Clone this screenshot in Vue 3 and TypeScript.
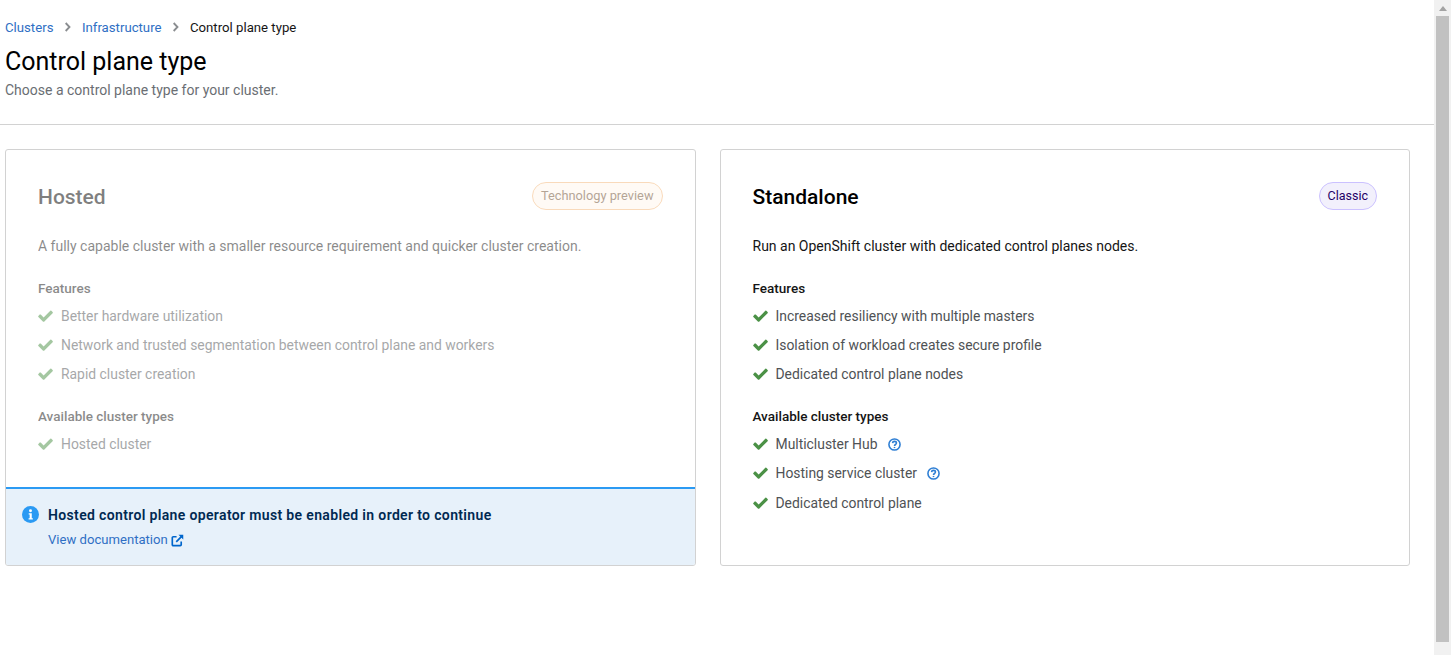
<script setup lang="ts">
interface Feature {
  label: string
  help?: boolean
}

interface PlaneCard {
  title: string
  badge: string
  badgeKind: string
  description: string
  features: Feature[]
  types: Feature[]
  disabled: boolean
}

const cards: PlaneCard[] = [
  {
    title: 'Hosted',
    badge: 'Technology preview',
    badgeKind: 'badge-orange',
    description: 'A fully capable cluster with a smaller resource requirement and quicker cluster creation.',
    features: [
      { label: 'Better hardware utilization' },
      { label: 'Network and trusted segmentation between control plane and workers' },
      { label: 'Rapid cluster creation' }
    ],
    types: [{ label: 'Hosted cluster' }],
    disabled: true
  },
  {
    title: 'Standalone',
    badge: 'Classic',
    badgeKind: 'badge-purple',
    description: 'Run an OpenShift cluster with dedicated control planes nodes.',
    features: [
      { label: 'Increased resiliency with multiple masters' },
      { label: 'Isolation of workload creates secure profile' },
      { label: 'Dedicated control plane nodes' }
    ],
    types: [
      { label: 'Multicluster Hub', help: true },
      { label: 'Hosting service cluster', help: true },
      { label: 'Dedicated control plane' }
    ],
    disabled: false
  }
]
</script>

<template>
  <div class="page">
    <div class="content">
      <header class="page-header">
        <nav class="breadcrumb">
          <a class="link">Clusters</a>
          <svg class="crumb-sep" viewBox="0 0 8 12"><path d="M1.8 1.2 6.4 6l-4.6 4.8" /></svg>
          <a class="link">Infrastructure</a>
          <svg class="crumb-sep" viewBox="0 0 8 12"><path d="M1.8 1.2 6.4 6l-4.6 4.8" /></svg>
          <span>Control plane type</span>
        </nav>
        <h1>Control plane type</h1>
        <p class="subtitle">Choose a control plane type for your cluster.</p>
      </header>

      <main class="cards">
        <section v-for="card in cards" :key="card.title" class="card">
          <div class="card-body" :class="{ disabled: card.disabled }">
            <div class="card-top">
              <h2>{{ card.title }}</h2>
              <span class="badge" :class="card.badgeKind">{{ card.badge }}</span>
            </div>
            <p class="description">{{ card.description }}</p>

            <h3>Features</h3>
            <ul>
              <li v-for="item in card.features" :key="item.label">
                <svg class="check" viewBox="0 0 16 13"><path d="M5.4 12.6.3 7.5a.8.8 0 0 1 0-1.1l1.4-1.4a.8.8 0 0 1 1.1 0L6 8.2 13.2.9a.8.8 0 0 1 1.1 0l1.4 1.4a.8.8 0 0 1 0 1.1L6.5 12.6a.8.8 0 0 1-1.1 0z" /></svg>
                <span>{{ item.label }}</span>
              </li>
            </ul>

            <h3 class="types-title">Available cluster types</h3>
            <ul class="types-list">
              <li v-for="item in card.types" :key="item.label">
                <svg class="check" viewBox="0 0 16 13"><path d="M5.4 12.6.3 7.5a.8.8 0 0 1 0-1.1l1.4-1.4a.8.8 0 0 1 1.1 0L6 8.2 13.2.9a.8.8 0 0 1 1.1 0l1.4 1.4a.8.8 0 0 1 0 1.1L6.5 12.6a.8.8 0 0 1-1.1 0z" /></svg>
                <span>{{ item.label }}</span>
                <svg v-if="item.help" class="help" viewBox="0 0 14 14">
                  <circle cx="7" cy="7" r="6" />
                  <path d="M4.9 5.5C5 4.2 5.9 3.6 7 3.6c1.2 0 2.1.7 2.1 1.8 0 1.6-2.1 1.6-2.1 3.2" />
                  <path d="M7 9.6v1.3" />
                </svg>
              </li>
            </ul>
          </div>

          <div v-if="card.disabled" class="alert">
            <svg class="alert-icon" viewBox="0 0 16 16">
              <circle cx="8" cy="8" r="8" fill="#2b9af3" />
              <circle cx="8" cy="4.5" r="1.4" fill="#fff" />
              <path d="M6.3 6.9h2.9v4.6h1v1.2H6.2v-1.2h1V8.1h-.9z" fill="#fff" />
            </svg>
            <div>
              <div class="alert-title">Hosted control plane operator must be enabled in order to continue</div>
              <a class="link alert-link">
                View documentation
                <svg class="external" viewBox="0 0 14 14">
                  <path d="M11 8v3.6a1 1 0 0 1-1 1H2.4a1 1 0 0 1-1-1V4a1 1 0 0 1 1-1H6" fill="none" stroke="#0066cc" stroke-width="1.8" />
                  <path d="M8 .8h5.2V6l-1.9-1.9-5 5-1.3-1.3 5-5z" fill="#0066cc" />
                </svg>
              </a>
            </div>
          </div>
        </section>
      </main>
    </div>

    <aside class="scrollbar">
      <span class="scroll-arrow"></span>
      <span class="scroll-thumb"></span>
    </aside>
  </div>
</template>

<style>
html,
body {
  margin: 0;
  height: 100%;
  overflow: hidden;
  background: #fff;
}
</style>

<style scoped>
.page {
  display: flex;
  height: 655px;
  font-family: Roboto, "Noto Sans", sans-serif;
  font-size: 14px;
  color: #151515;
}

.content {
  flex: 1;
  min-width: 0;
}

.page-header {
  height: 124px;
  padding: 0 5px;
  border-bottom: 1px solid #d2d2d2;
}

.breadcrumb {
  display: flex;
  align-items: center;
  height: 20px;
  padding-top: 17px;
  font-size: 13.2px;
}

.link {
  color: #2f6fc4;
}

.crumb-sep {
  width: 7px;
  height: 10px;
  margin: 0 11px 0 10.5px;
  fill: none;
  stroke: #8a8d90;
  stroke-width: 2.2;
}

h1 {
  margin: 9px 0 0;
  font-size: 25px;
  font-weight: 400;
  line-height: 32px;
  color: #000;
}

.subtitle {
  margin: 2px 0 0;
  line-height: 20px;
  color: #6a6e73;
}

.cards {
  display: grid;
  grid-template-columns: 1fr 1fr;
  gap: 24px;
  padding: 24px 24px 0 5px;
}

.card {
  display: flex;
  flex-direction: column;
  height: 417px;
  box-sizing: border-box;
  border: 1px solid #d2d2d2;
  border-radius: 3px;
  overflow: hidden;
}

.card-body {
  flex: 1;
  padding: 32px 32px 0;
}

.card-body.disabled {
  opacity: 0.5;
}

.card-top {
  display: flex;
  align-items: flex-start;
  justify-content: space-between;
}

h2 {
  margin: 0;
  padding-top: 1px;
  font-size: 21px;
  font-weight: 500;
  line-height: 28px;
  color: #000;
}

.badge {
  box-sizing: border-box;
  height: 28px;
  padding: 0 8px;
  border: 1px solid;
  border-radius: 14px;
  line-height: 25px;
}

.badge-orange {
  font-size: 12.8px;
  background: #fff6ec;
  border-color: #f4b678;
  color: #6a4a2c;
}

.badge-purple {
  font-size: 12.5px;
  background: #f2f0fc;
  border-color: #cbc1ff;
  color: #1f0066;
}

.description {
  margin: 25px 0 0;
  line-height: 20px;
}

h3 {
  margin: 22px 0 0;
  font-size: 13.5px;
  font-weight: 500;
  line-height: 20px;
}

.types-title {
  margin-top: 21px;
}

ul {
  margin: 7px 0 0;
  padding: 0;
  list-style: none;
}

.types-list {
  margin-top: 8px;
}

li {
  display: flex;
  align-items: center;
  height: 21px;
  font-size: 13.9px;
  color: #4f5255;
}

li + li {
  margin-top: 8.3px;
}

.check {
  flex: none;
  width: 15px;
  height: 12px;
  margin-right: 8px;
  fill: #4b9146;
}

.help {
  flex: none;
  width: 13px;
  height: 13px;
  margin-left: 10px;
  fill: none;
  stroke: #2f7fd4;
  stroke-width: 1.7;
}

.alert {
  display: flex;
  gap: 9px;
  height: 78px;
  box-sizing: border-box;
  padding: 17px 16px 0;
  background: #e7f1fa;
  border-top: 2px solid #2b9af3;
}

.alert-icon {
  flex: none;
  width: 17px;
  height: 17px;
}

.alert-title {
  font-weight: 600;
  line-height: 18px;
  letter-spacing: 0.35px;
  color: #002952;
}

.alert-link {
  display: inline-flex;
  align-items: center;
  gap: 3px;
  margin-top: 7px;
  font-size: 13.1px;
  line-height: 18px;
}

.external {
  width: 13px;
  height: 13px;
}

.scrollbar {
  flex: none;
  width: 17px;
  display: flex;
  flex-direction: column;
  align-items: center;
  background: #f1f1f1;
}

.scroll-arrow {
  width: 0;
  height: 0;
  margin-top: 6px;
  border: 4px solid transparent;
  border-top: 0;
  border-bottom: 5px solid #a3a3a3;
}

.scroll-thumb {
  width: 13px;
  height: 626px;
  margin-top: 5px;
  background: #c1c1c1;
}
</style>
